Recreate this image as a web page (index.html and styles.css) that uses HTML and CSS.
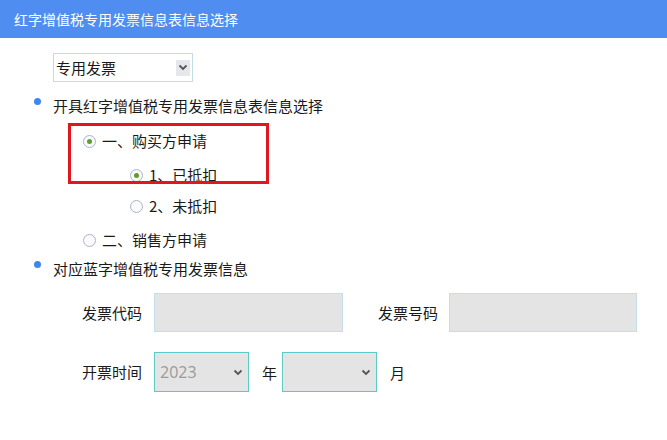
FILE: index.html
```html
<!DOCTYPE html>
<html lang="zh-CN">
<head>
<meta charset="utf-8">
<title>红字增值税专用发票信息表信息选择</title>
<link rel="stylesheet" href="styles.css">
</head>
<body>
<div class="header">红字增值税专用发票信息表信息选择</div>
<div class="content">
  <div class="type-select">
    <span class="type-value">专用发票</span>
    <span class="type-arrow"><svg width="10" height="7" viewBox="0 0 10 7"><path d="M1.5 1.5 L5 5 L8.5 1.5" fill="none" stroke="#555" stroke-width="1.8"/></svg></span>
  </div>

  <div class="section-title title-one"><span class="dot"></span>开具红字增值税专用发票信息表信息选择</div>

  <div class="radio-row level-1 row-a"><span class="radio checked"></span>一、购买方申请</div>
  <div class="radio-row level-2 row-b"><span class="radio checked"></span>1、已抵扣</div>
  <div class="radio-row level-2 row-c"><span class="radio"></span>2、未抵扣</div>
  <div class="radio-row level-1 row-d"><span class="radio"></span>二、销售方申请</div>

  <div class="section-title title-two"><span class="dot"></span>对应蓝字增值税专用发票信息</div>

  <div class="field-row row-code">
    <span class="label">发票代码</span>
    <span class="text-input w189"></span>
    <span class="label label-gap">发票号码</span>
    <span class="text-input w188"></span>
  </div>

  <div class="field-row row-time">
    <span class="label">开票时间</span>
    <span class="time-select"><span class="time-value">2023</span><svg width="10" height="7" viewBox="0 0 10 7"><path d="M1.5 1.5 L5 5 L8.5 1.5" fill="none" stroke="#555" stroke-width="1.8"/></svg></span>
    <span class="unit">年</span>
    <span class="time-select month"><span class="time-value"></span><svg width="10" height="7" viewBox="0 0 10 7"><path d="M1.5 1.5 L5 5 L8.5 1.5" fill="none" stroke="#555" stroke-width="1.8"/></svg></span>
    <span class="unit unit-month">月</span>
  </div>

  <div class="highlight-box"></div>
</div>
</body>
</html>
```

FILE: styles.css
```css
html, body {
  margin: 0;
  padding: 0;
  background: #ffffff;
}
body {
  font-family: "Noto Sans CJK SC", "Microsoft YaHei", "Noto Sans", sans-serif;
  font-size: 15px;
  color: #1a1a1a;
  width: 667px;
  height: 440px;
  overflow: hidden;
}
.header {
  height: 38px;
  line-height: 38px;
  background: #4f8ef0;
  color: #ffffff;
  font-size: 14px;
  padding-left: 14px;
}
.content {
  position: relative;
  display: flow-root;
  padding-left: 53px;
}
.type-select {
  margin-top: 15px;
  width: 140px;
  height: 29px;
  box-sizing: border-box;
  border: 1px solid #c8dce8;
  display: flex;
  align-items: center;
  justify-content: space-between;
  padding-left: 2px;
  padding-right: 2px;
}
.type-value {
  line-height: 20px;
}
.type-arrow {
  width: 14px;
  height: 16px;
  background: #e4e7ec;
  display: flex;
  align-items: center;
  justify-content: center;
}
.section-title {
  display: flex;
  align-items: center;
  height: 20px;
  line-height: 20px;
  position: relative;
}
.title-one { margin-top: 14px; }
.title-two { margin-top: 9px; }
.dot {
  position: absolute;
  left: -19px;
  top: 2px;
  width: 7px;
  height: 7px;
  border-radius: 50%;
  background: #3e86f0;
}
.radio-row {
  display: flex;
  align-items: center;
  height: 20px;
  line-height: 20px;
}
.level-1 { padding-left: 30px; }
.level-2 { padding-left: 77px; }
.row-a { margin-top: 15px; }
.row-b { margin-top: 14px; }
.row-c { margin-top: 11px; }
.row-d { margin-top: 14px; }
.radio {
  width: 11px;
  height: 11px;
  border-radius: 50%;
  border: 1px solid #a9b3c6;
  background: #fbfbfd;
  margin-right: 6px;
  display: flex;
  align-items: center;
  justify-content: center;
  flex-shrink: 0;
}
.radio.checked::after {
  content: "";
  width: 5px;
  height: 5px;
  border-radius: 50%;
  background: #5c9e2e;
}
.field-row {
  display: flex;
  align-items: center;
  padding-left: 29px;
}
.row-code { margin-top: 14px; }
.row-time { margin-top: 20px; }
.label {
  width: 60px;
  margin-right: 12px;
  line-height: 20px;
}
.label-gap {
  margin-left: 35px;
  margin-right: 11px;
}
.text-input {
  height: 39px;
  box-sizing: border-box;
  background: #e4e4e4;
  border: 1px solid #c4dfe8;
}
.w189 { width: 189px; }
.w188 { width: 188px; }
.time-select {
  width: 95px;
  height: 40px;
  box-sizing: border-box;
  background: #e4e4e4;
  border: 1px solid #5ccac6;
  display: flex;
  align-items: center;
  justify-content: space-between;
  padding-left: 5px;
  padding-right: 5px;
}
.time-value {
  color: #9a9a9a;
  font-family: "Open Sans", "Noto Sans", sans-serif;
  font-size: 16px;
}
.unit {
  margin-left: 13px;
  margin-right: 5px;
}
.unit-month {
  margin-right: 0;
}
.highlight-box {
  position: absolute;
  left: 68px;
  top: 85px;
  width: 201px;
  height: 61px;
  box-sizing: border-box;
  border: 3px solid #e0181e;
}
```
